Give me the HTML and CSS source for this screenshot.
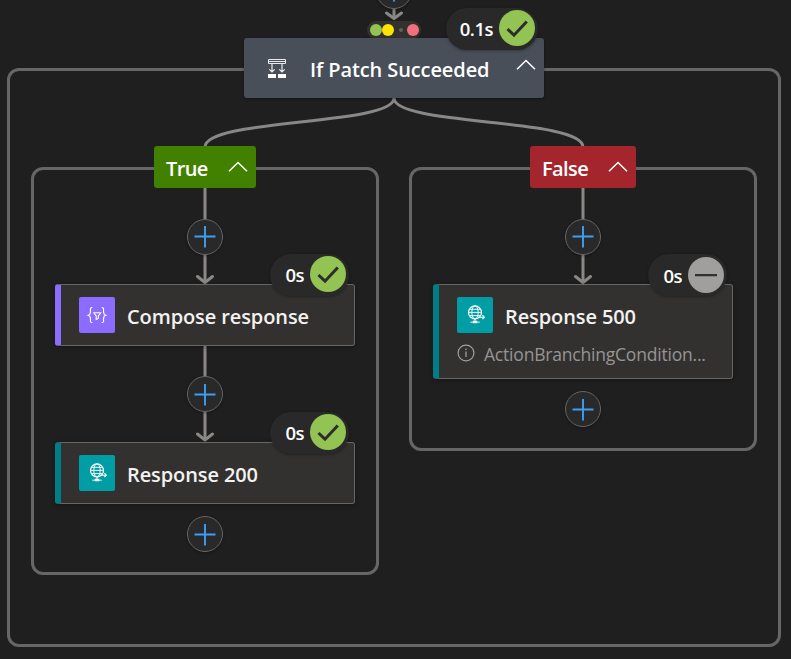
FILE: index.html
```html
<!DOCTYPE html>
<html lang="en">
<head>
<meta charset="utf-8">
<title>Workflow run</title>
<link rel="stylesheet" href="styles.css">
</head>
<body>
<svg class="defs" width="0" height="0" aria-hidden="true">
  <symbol id="check" viewBox="0 0 36 36"><path d="M8.5 19 15 25.2 27.8 11.4" fill="none" stroke="#2d2d2d" stroke-width="3"/></symbol>
  <symbol id="minus" viewBox="0 0 36 36"><path d="M7 18.2H29" fill="none" stroke="#323130" stroke-width="2.2"/></symbol>
  <symbol id="chevron" viewBox="0 0 20 12"><path d="M1 10.3 10 1.5 19 10.3" fill="none" stroke="#fff" stroke-width="1.5"/></symbol>
  <symbol id="plus" viewBox="0 0 22 22"><path d="M.5 10.5H21.5M11 0V21.5" fill="none" stroke="#3b9ff5" stroke-width="1.9"/></symbol>
  <symbol id="globe" viewBox="0 0 36 36">
    <g fill="none" stroke="#fff" stroke-width=".9">
      <circle cx="18" cy="15.4" r="6.5" stroke-width="1.2"/><ellipse cx="18" cy="15.4" rx="3.2" ry="6.5"/>
      <path d="M18 21.500V26M11.500 15.400H24.500M12.800 12.300H23.200M12.800 18.600H23.200M13.300 25.200H22.700"/>
      <path d="M21 20.200H27.500M25.400 18.200l2 2-2 2" stroke-width="1.100"/>
    </g>
    <path d="M15.800 23.800h4.400v2.500h-4.400z" fill="#fff"/>
  </symbol>
</svg>
<main class="canvas">
  <section class="scope scope-outer"></section>
  <section class="scope scope-true"></section>
  <section class="scope scope-false"></section>

  <svg class="edges" width="791" height="659" viewBox="0 0 791 659">
    <path d="M394 98C394 126 205 118 205 147M394 98C394 126 583 118 583 147"/>
    <path d="M205 188V282M205 346V439M583 188V282M394 8V18"/>
    <path class="head" d="M197.500 276.500 205 282.500 212.500 276.500M197.500 434 205 440 212.500 434M575.500 276.500 583 282.500 590.500 276.500M386.500 13 394 18.500 401.500 13"/>
  </svg>

  <span class="add add-top"><svg><use href="#plus"/></svg></span>
  <span class="add add-t1"><svg><use href="#plus"/></svg></span>
  <span class="add add-t2"><svg><use href="#plus"/></svg></span>
  <span class="add add-t3"><svg><use href="#plus"/></svg></span>
  <span class="add add-f1"><svg><use href="#plus"/></svg></span>
  <span class="add add-f2"><svg><use href="#plus"/></svg></span>

  <div class="run-after"><i class="dot green"></i><i class="dot yellow"></i><i class="dot tiny"></i><i class="dot pink"></i></div>

  <header class="condition">
    <svg class="condition-icon" viewBox="0 0 20 20">
      <g fill="none" stroke="#e8eaec" stroke-width="1"><path d="M1.500 1.500H18.500V5.500H1.500zM1.500 3.500H18.500"/><path d="M5 5V14M15 5V14M2.300 11.300 5 14 7.700 11.300M12.300 11.300 15 14 17.700 11.300" stroke-width="1.200"/></g>
      <path d="M1 16H9V20H1zM11 16H19V20H11z" fill="#fff"/>
    </svg>
    <h1 class="title title-condition">If Patch Succeeded</h1>
    <svg class="chevron"><use href="#chevron"/></svg>
  </header>
  <div class="status status-condition"><span class="time">0.1s</span><svg class="mark ok"><use href="#check"/></svg></div>

  <div class="branch branch-true"><span class="branch-name">True</span><svg class="chevron"><use href="#chevron"/></svg></div>
  <div class="branch branch-false"><span class="branch-name">False</span><svg class="chevron"><use href="#chevron"/></svg></div>

  <article class="card card-compose">
    <div class="row">
      <svg class="icon violet" viewBox="0 0 36 36"><g fill="none" stroke="#fff" stroke-width="1.100"><path d="M13.300 10.500C10.800 10.500 11.500 12 11.500 14.500C11.500 17 10.700 17.800 9.300 18.200C10.700 18.600 11.500 19.500 11.500 22C11.500 24.500 10.800 25.500 13.300 25.500M22.700 10.500C25.200 10.500 24.500 12 24.500 14.500C24.500 17 25.300 17.800 26.700 18.200C25.300 18.600 24.500 19.500 24.500 22C24.500 24.500 25.200 25.500 22.700 25.500"/><path d="M14.800 15.700H21.700L19.300 19V21.500L17.200 22.500V19z"/></g></svg>
      <h2 class="title title-compose">Compose response</h2>
    </div>
  </article>
  <div class="status status-compose"><span class="time">0s</span><svg class="mark ok"><use href="#check"/></svg></div>

  <article class="card card-200">
    <div class="row"><svg class="icon teal"><use href="#globe"/></svg><h2 class="title title-response">Response 200</h2></div>
  </article>
  <div class="status status-200"><span class="time">0s</span><svg class="mark ok"><use href="#check"/></svg></div>

  <article class="card card-500">
    <div class="row"><svg class="icon teal"><use href="#globe"/></svg><h2 class="title title-response">Response 500</h2></div>
    <div class="message">
      <svg class="info" viewBox="0 0 18 18"><circle cx="9" cy="9" r="7.900" fill="none" stroke="#a19f9d" stroke-width="1.200"/><path d="M9 7.500V13M9 4.500V6" stroke="#a19f9d" stroke-width="1.300"/></svg>
      <span class="message-text">ActionBranchingCondition...</span>
    </div>
  </article>
  <div class="status status-500"><span class="time">0s</span><svg class="mark skipped"><use href="#minus"/></svg></div>
</main>
</body>
</html>
```
FILE: styles.css
```css
* { box-sizing: border-box; }
body { margin: 0; background: #1f1f1f; color: #fff; font-family: "Open Sans", "Noto Sans", sans-serif; }
svg { display: block; flex: none; }
.defs { position: absolute; }
.canvas { position: relative; width: 791px; height: 659px; overflow: hidden; }

.scope { position: absolute; border: 3px solid #666; border-radius: 12px; }
.scope-outer { left: 7px; top: 68.4px; width: 774px; height: 579px; }
.scope-true { left: 31px; top: 167.4px; width: 348px; height: 408px; }
.scope-false { left: 409px; top: 167.4px; width: 348px; height: 284px; }

.edges { position: absolute; left: 0; top: 0; fill: none; stroke: #8a8886; stroke-width: 3; }
.head { stroke-linecap: round; stroke-linejoin: round; }

.add { position: absolute; width: 36px; height: 36px; border: 1px solid #666; border-radius: 50%; background: #292929; display: flex; align-items: center; justify-content: center; box-shadow: 0 1px 3px rgba(0, 0, 0, .3); }
.add svg { width: 22px; height: 22px; }
.add-top { left: 376px; top: -27px; }
.add-t1 { left: 187px; top: 219px; }
.add-t2 { left: 187px; top: 376px; }
.add-t3 { left: 187px; top: 516px; }
.add-f1 { left: 565px; top: 219px; }
.add-f2 { left: 565px; top: 391px; }
.add-t2 svg, .add-t3 svg, .add-f2 svg { margin-top: 1px; }

.run-after { position: absolute; left: 367px; top: 21px; width: 54px; height: 18px; padding-left: 3px; border-radius: 9px; background: #323130; display: flex; align-items: center; }
.dot { width: 12px; height: 12px; border-radius: 50%; }
.green { background: #92c353; }
.yellow { background: #fde300; }
.tiny { width: 4px; height: 4px; margin: 0 4px 0 5px; background: #605e5c; }
.pink { background: #f1707b; }

.condition { position: absolute; left: 244px; top: 38px; width: 300px; height: 60px; padding-left: 23px; border-radius: 3px; background: #484f58; display: flex; align-items: center; box-shadow: 0 1px 3px rgba(0, 0, 0, .4); }
.condition-icon { width: 20px; height: 20px; margin-right: 23px; }
.chevron { width: 20px; height: 12px; }
.condition .chevron { margin: -6px 8px 0 auto; }
.title { margin: 0; font-size: 20px; letter-spacing: -.1px; line-height: 28px; font-weight: 600; white-space: nowrap; color: #f3f2f1; }
.title-condition { color: #fff; margin-top: 3px; }

.branch { position: absolute; top: 146px; height: 42px; padding: 0 8px 0 12px; border-radius: 3px; display: flex; align-items: center; justify-content: space-between; }
.branch-true { left: 154px; width: 102px; background: #428000; }
.branch-false { left: 530px; width: 106px; background: #a4262c; }
.branch-name { font-size: 20px; letter-spacing: -.6px; font-weight: 600; line-height: 28px; padding-top: 3px; }

.card { position: absolute; width: 300px; border: 1px solid #666; border-left: 6px solid #007e87; border-radius: 3px; background: #323130; padding: 12px 18px; box-shadow: 0 1px 4px rgba(0, 0, 0, .35); }
.card-compose { left: 55px; top: 284px; height: 62px; border-left-color: #8c6cff; }
.card-200 { left: 55px; top: 442px; height: 62px; }
.card-500 { left: 433px; top: 284px; height: 95px; }
.row { display: flex; align-items: center; gap: 12px; }
.row .title { margin-top: 4px; }
.icon { width: 36px; height: 36px; border-radius: 2px; }
.violet { background: #8c6cff; }
.teal { background: #009da5; }
.message { display: flex; align-items: center; gap: 9px; margin-top: 9px; height: 24px; }
.info { width: 18px; height: 18px; margin-top: -2px; }
.message-text { font-size: 17.5px; letter-spacing: -.2px; line-height: 24px; color: #979593; white-space: nowrap; }

.status { position: absolute; height: 42px; border-radius: 21px; background: #292929; padding-right: 3px; display: flex; align-items: center; justify-content: flex-end; gap: 6px; box-shadow: 0 1px 3px rgba(0, 0, 0, .3); }
.status-condition { left: 446px; top: 8px; width: 92px; padding-bottom: 2px; }
.status-compose { left: 270px; top: 254px; width: 79px; padding-bottom: 2px; }
.status-200 { left: 270px; top: 412px; width: 79px; padding-bottom: 2px; }
.status-500 { left: 648px; top: 254px; width: 79px; }
.time { font-size: 18.5px; font-weight: 600; letter-spacing: -.5px; padding-top: 1px; }
.status-500 .time { padding-top: 0; }
.mark { width: 36px; height: 36px; border-radius: 50%; }
.ok { background: #92c353; }
.skipped { background: #a19f9d; }
```
